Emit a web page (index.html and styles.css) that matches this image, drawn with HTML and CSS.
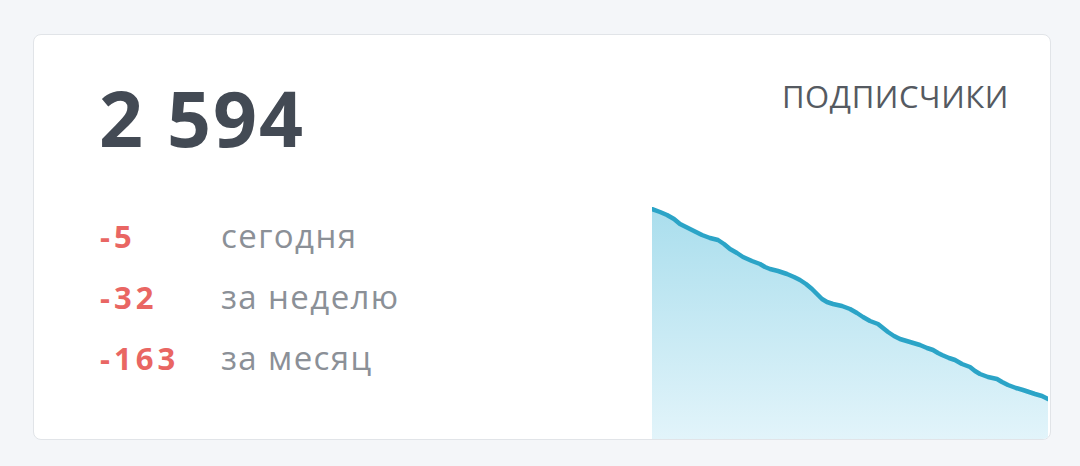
FILE: index.html
```html
<!DOCTYPE html>
<html lang="ru">
<head>
<meta charset="utf-8">
<title>Подписчики</title>
<link rel="stylesheet" href="styles.css">
</head>
<body>
<section class="card">
  <header class="card-head">
    <div class="total">2 594</div>
    <div class="title">ПОДПИСЧИКИ</div>
  </header>
  <div class="card-body">
    <ul class="stats">
      <li class="stat"><span class="delta">-5</span><span class="period">сегодня</span></li>
      <li class="stat"><span class="delta">-32</span><span class="period">за неделю</span></li>
      <li class="stat"><span class="delta">-163</span><span class="period">за месяц</span></li>
    </ul>
    <svg class="chart" viewBox="0 -2 396 232" preserveAspectRatio="none" aria-hidden="true">
      <defs>
        <linearGradient id="area" x1="0" y1="0" x2="0" y2="1">
          <stop offset="0" stop-color="#aadeed"/>
          <stop offset="1" stop-color="#e2f4fa"/>
        </linearGradient>
      </defs>
      <polygon fill="url(#area)" points="0,0 8,3 15,6 22,10 28,15 38,20 50,26 58,29 66,31 72,35 78,40 85,44 91,48 100,52 108,55 113,58 118,60 126,62 135,65 142,68 148,71 154,75 160,80 165,85 170,90 175,93 181,95 190,97 198,100 205,104 211,108 218,112 226,115 231,119 236,123 242,127 248,130 258,133 268,136 275,139 281,141 286,144 290,146 297,149 303,151 310,155 318,158 323,162 328,165 336,168 345,170 350,173 356,176 364,179 371,181 377,183 383,185 390,187 396,190 396,230 0,230"/>
      <polyline fill="none" stroke="#2ba4c7" stroke-width="4.5" stroke-linejoin="round" stroke-linecap="round" points="0,0 8,3 15,6 22,10 28,15 38,20 50,26 58,29 66,31 72,35 78,40 85,44 91,48 100,52 108,55 113,58 118,60 126,62 135,65 142,68 148,71 154,75 160,80 165,85 170,90 175,93 181,95 190,97 198,100 205,104 211,108 218,112 226,115 231,119 236,123 242,127 248,130 258,133 268,136 275,139 281,141 286,144 290,146 297,149 303,151 310,155 318,158 323,162 328,165 336,168 345,170 350,173 356,176 364,179 371,181 377,183 383,185 390,187 396,190"/>
    </svg>
  </div>
</section>
</body>
</html>
```

FILE: styles.css
```css
html, body {
  margin: 0;
  padding: 0;
}

body {
  background: #f4f6f9;
  font-family: "Open Sans", "Noto Sans", sans-serif;
  padding: 34px 30px 0 33px;
}

.card {
  box-sizing: border-box;
  width: 1018px;
  height: 406px;
  background: #ffffff;
  border: 1px solid #e1e4e8;
  border-radius: 8px;
  overflow: hidden;
  display: flex;
  flex-direction: column;
}

.card-head {
  display: flex;
  justify-content: space-between;
  align-items: flex-start;
  padding: 44px 41px 0 65px;
}

.total {
  font-size: 77px;
  font-weight: 700;
  line-height: 1;
  color: #434a54;
  letter-spacing: 2px;
}

.title {
  font-size: 31px;
  line-height: 1;
  color: #555a61;
  margin-top: 2px;
  letter-spacing: 0.6px;
}

.card-body {
  flex: 1;
  display: flex;
  justify-content: space-between;
  align-items: flex-end;
}

.stats {
  list-style: none;
  margin: 0;
  padding: 0 0 61px 66px;
  display: flex;
  flex-direction: column;
  gap: 21px;
}

.stat {
  display: flex;
  align-items: baseline;
  line-height: 40px;
}

.delta {
  width: 121px;
  font-size: 31px;
  font-weight: 700;
  letter-spacing: 4px;
  color: #e96663;
}

.period {
  font-size: 33px;
  letter-spacing: 1.4px;
  color: #8b9097;
}

.chart {
  display: block;
  width: 396px;
  height: 232px;
  margin-right: 2px;
}
```
